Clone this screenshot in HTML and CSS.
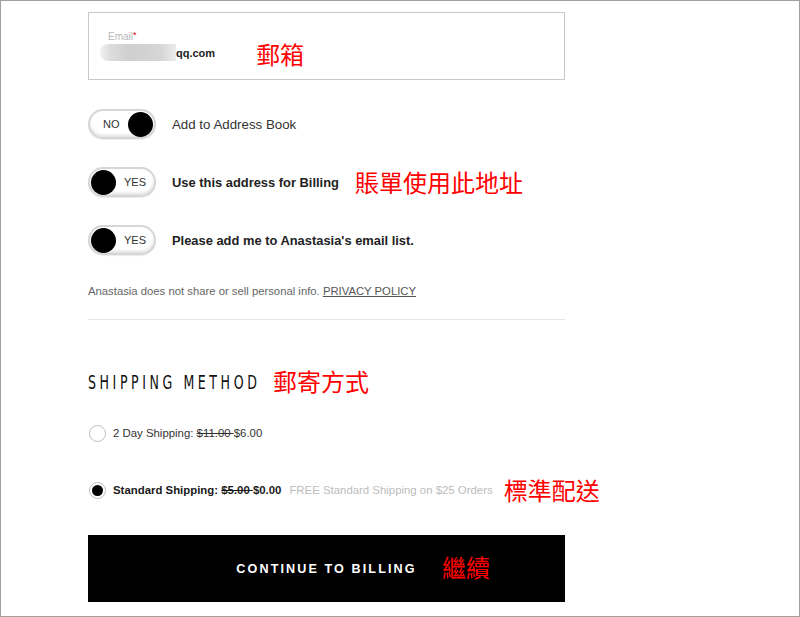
FILE: index.html
```html
<!DOCTYPE html>
<html>
<head>
<meta charset="utf-8">
<link rel="stylesheet" href="styles.css">
</head>
<body>
<div class="frame">
  <div class="col">
    <div class="field">
      <div class="label">Email<span class="req">*</span></div>
      <div class="value"><span class="blur"></span><span class="domain">qq.com</span><span class="note note-email">郵箱</span></div>
    </div>

    <div class="row toggle-row first">
      <span class="toggle off"><span class="tlabel">NO</span><span class="knob"></span></span>
      <span class="rtext">Add to Address Book</span>
    </div>
    <div class="row toggle-row">
      <span class="toggle on"><span class="knob"></span><span class="tlabel">YES</span></span>
      <span class="rtext bold">Use this address for Billing</span>
      <span class="note note-billing">賬單使用此地址</span>
    </div>
    <div class="row toggle-row">
      <span class="toggle on"><span class="knob"></span><span class="tlabel">YES</span></span>
      <span class="rtext bold">Please add me to Anastasia's email list.</span>
    </div>

    <p class="privacy">Anastasia does not share or sell personal info. <a class="plink">PRIVACY POLICY</a></p>

    <hr class="divider">

    <h2 class="heading"><span class="hbox"><span class="htext">SHIPPING METHOD</span></span><span class="note note-head">郵寄方式</span></h2>

    <div class="row radio-row first-radio">
      <span class="radio"></span>
      <span class="stext">2 Day Shipping: <s>$11.00&nbsp;</s>$6.00</span>
    </div>
    <div class="row radio-row second-radio">
      <span class="radio checked"></span>
      <span class="stext medium">Standard Shipping: <s>$5.00&nbsp;</s>$0.00</span>
      <span class="free">FREE Standard Shipping on $25 Orders</span>
      <span class="note note-std">標準配送</span>
    </div>

    <button class="cta"><span class="cta-text">CONTINUE TO BILLING</span><span class="note note-btn">繼續</span></button>
  </div>
</div>
</body>
</html>
```
FILE: styles.css
```css
html, body {
  margin: 0;
  padding: 0;
  background: #fff;
}
.frame {
  box-sizing: border-box;
  width: 800px;
  height: 617px;
  border: 1px solid #a0a0a0;
  overflow: hidden;
  font-family: "Liberation Sans", Arial, sans-serif;
  color: #222;
}
.col {
  width: 477px;
  margin-left: 87px;
  padding-top: 11px;
  display: flex;
  flex-direction: column;
}
.note {
  font-family: "Noto Sans CJK TC", "Noto Sans CJK SC", sans-serif;
  color: #ff0000;
  font-size: 24px;
  font-weight: 400;
  line-height: 26px;
  letter-spacing: 0;
  white-space: nowrap;
  flex-shrink: 0;
}
.field {
  box-sizing: border-box;
  height: 68px;
  border: 1px solid #c8c8c8;
  padding: 18px 0 0 11px;
}
.label {
  font-size: 10px;
  line-height: 12px;
  color: #b8b8b8;
  margin-left: 8px;
}
.req {
  color: #e00;
  font-size: 9px;
  vertical-align: top;
  position: relative;
  top: -2px;
}
.value {
  display: flex;
  align-items: center;
  height: 20px;
  margin-top: -1px;
}
.blur {
  width: 76px;
  height: 17px;
  border-radius: 8px 0 0 8px;
  background: linear-gradient(90deg, #f2f2f2 0, #dcdcdc 14%, #cfcfcf 40%, #d6d6d6 80%, #ececec 100%);
}
.domain {
  font-size: 11px;
  font-weight: 700;
  color: #222;
  margin-top: 2px;
}
.note-email {
  margin-left: 41px;
  margin-top: 4px;
}
.row {
  display: flex;
  align-items: center;
  white-space: nowrap;
}
.row > * { flex-shrink: 0; }
.toggle-row {
  height: 30px;
  margin-top: 28px;
}
.toggle-row.first {
  margin-top: 29px;
}
.toggle {
  box-sizing: border-box;
  width: 68px;
  height: 30px;
  border: 2px solid #d6d6d6;
  border-radius: 15px;
  box-shadow: inset 0 -2px 3px rgba(0,0,0,0.12), 0 1px 1px rgba(0,0,0,0.08);
  display: flex;
  align-items: center;
  padding: 0 1px;
  background: #fff;
}
.toggle.off { justify-content: space-between; padding-left: 13px; }
.toggle.on { gap: 8px; }
.knob {
  width: 25px;
  height: 25px;
  border-radius: 50%;
  background: #000;
}
.tlabel {
  font-size: 11px;
  color: #333;
}
.rtext {
  margin-left: 16px;
  font-size: 13.3px;
  color: #333;
}
.rtext.bold {
  font-weight: 700;
  color: #222;
  font-size: 12.9px;
}
.note-billing {
  margin-left: 16px;
}
.privacy {
  margin: 29px 0 0 0;
  font-size: 11.3px;
  line-height: 14px;
  color: #666;
}
.plink {
  text-decoration: underline;
  color: #555;
}
.divider {
  margin: 21px 0 0 0;
  border: 0;
  height: 1px;
  background: #e6e6e6;
  width: 477px;
}
.heading {
  margin: 48px 0 0 0;
  font-weight: 400;
  line-height: 24px;
  display: flex;
  align-items: center;
  white-space: nowrap;
}
.hbox {
  width: 171px;
  flex-shrink: 0;
}
.htext {
  display: inline-block;
  font-family: "DejaVu Sans Condensed", "Liberation Sans Narrow", sans-serif;
  font-stretch: condensed;
  font-size: 20px;
  letter-spacing: 5.1px;
  color: #111;
  transform: scaleX(0.7);
  transform-origin: 0 50%;
}
.note-head {
  margin-left: 14px;
}
.radio-row {
  height: 18px;
}
.first-radio { margin-top: 30px; }
.second-radio { margin-top: 39px; }
.radio {
  box-sizing: border-box;
  width: 17px;
  height: 17px;
  border: 1px solid #bdbdbd;
  border-radius: 50%;
  margin-left: 1px;
  position: relative;
}
.radio.checked::after {
  content: "";
  position: absolute;
  left: 2px;
  top: 2px;
  width: 11px;
  height: 11px;
  border-radius: 50%;
  background: #000;
}
.stext {
  margin-left: 7px;
  font-size: 11.4px;
  color: #333;
}
.stext.medium {
  color: #1a1a1a;
  font-weight: 700;
  font-size: 11.4px;
}
.free {
  margin-left: 8px;
  font-size: 11.4px;
  color: #bcbcbc;
}
.note-std {
  margin-left: 11px;
}
.cta {
  margin-top: 36px;
  height: 67px;
  width: 477px;
  border: 0;
  background: #000;
  color: #fff;
  position: relative;
  padding: 0;
  display: flex;
  align-items: center;
  justify-content: center;
  flex-shrink: 0;
}
.cta-text {
  font-family: "Liberation Sans", Arial, sans-serif;
  font-weight: 700;
  font-size: 12.6px;
  letter-spacing: 2.1px;
}
.note-btn {
  position: absolute;
  left: 354px;
  top: 19px;
}
```
